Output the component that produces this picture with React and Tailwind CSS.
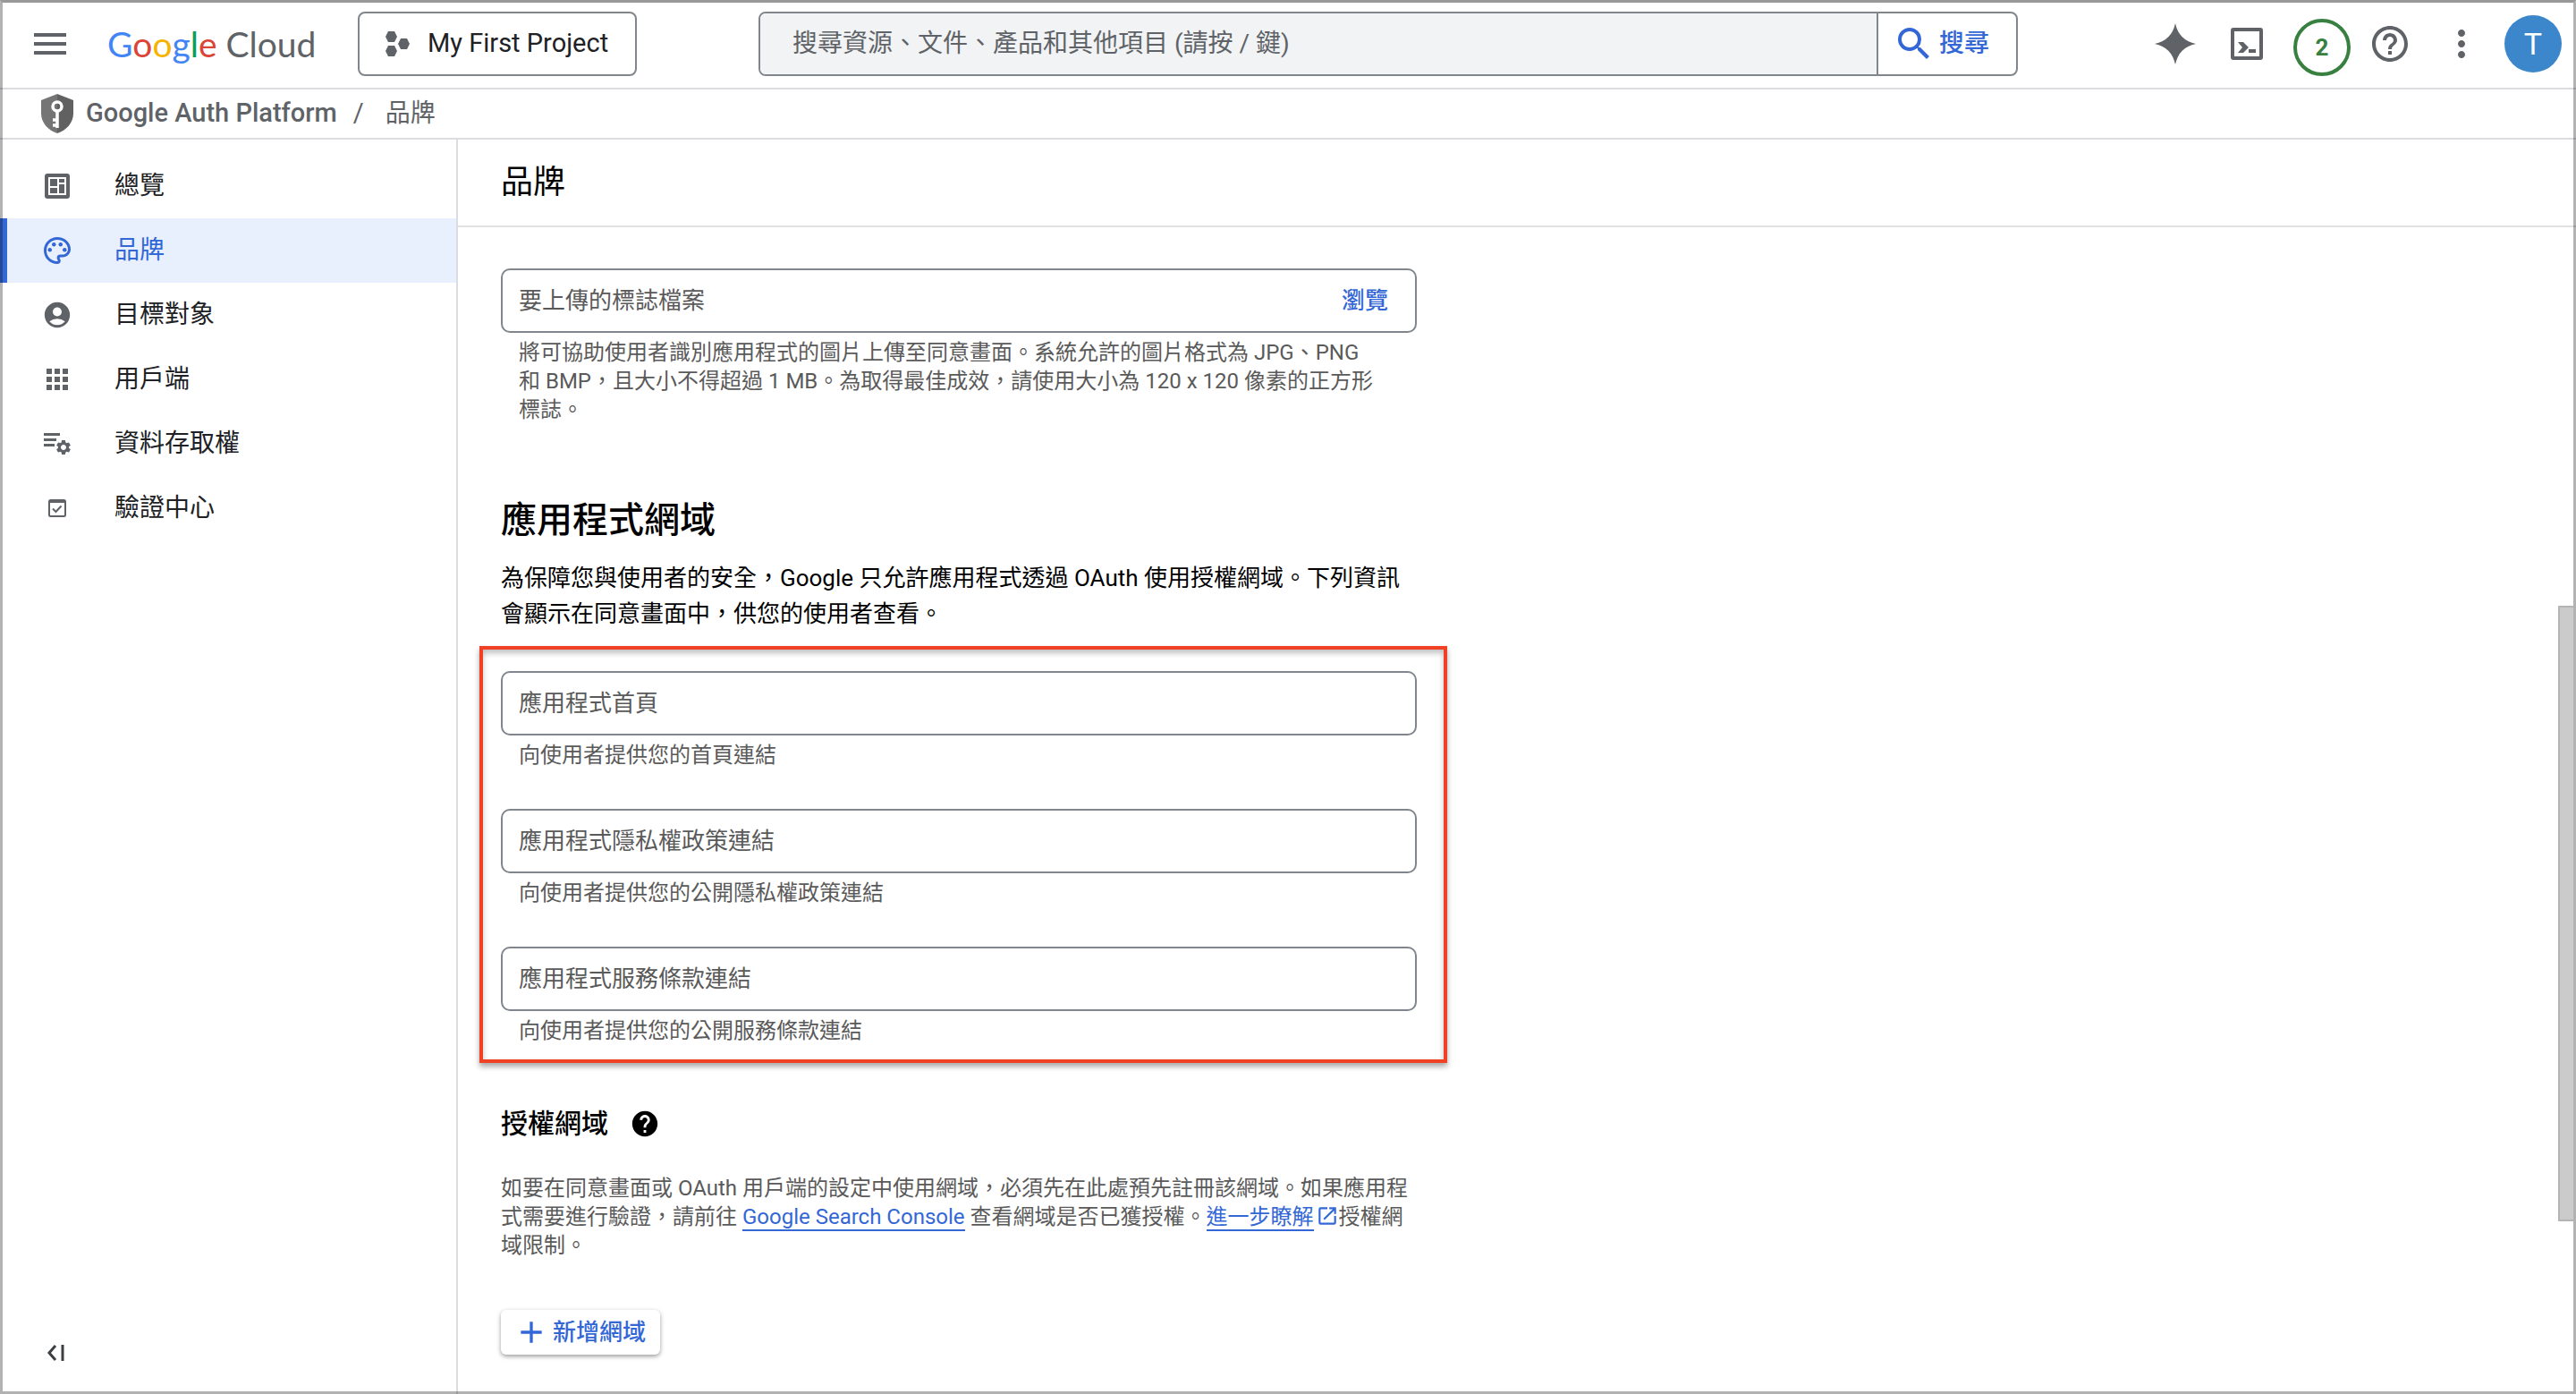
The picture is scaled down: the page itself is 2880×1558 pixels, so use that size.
import React from 'react';
import { MdAccountCircle, MdAdd, MdApps, MdHelp, MdHelpOutline, MdMoreVert, MdOpenInNew, MdOutlinePalette, MdSearch, MdSettings } from 'react-icons/md';

const fontStack = "font-['Roboto','Noto_Sans_CJK_TC',sans-serif]";

const OverviewIcon = () => (
    <svg viewBox="0 0 28 28" className="w-7 h-7" fill="currentColor" aria-hidden="true">
        <path fillRule="evenodd" d="M3 0h22a3 3 0 0 1 3 3v22a3 3 0 0 1-3 3H3a3 3 0 0 1-3-3V3a3 3 0 0 1 3-3zM4 4v20h20V4z" />
        <path d="M6 6h8v8H6zM16 6h6v4h-6zM16 12h6v10h-6zM6 16h8v6H6z" />
    </svg>
);

const DataAccessIcon = () => (
    <span className="relative block w-[30px] h-6">
        <svg viewBox="0 0 30 24" className="w-[30px] h-6" fill="currentColor" aria-hidden="true">
            <path d="M0 0h18v3H0zM0 6h14v3H0zM0 12h12v3H0z" />
        </svg>
        <MdSettings className="absolute -right-0.5 -bottom-0.5 text-[20px]" />
    </span>
);

const VerificationIcon = () => (
    <svg viewBox="0 0 20 20" className="w-5 h-5" fill="none" stroke="currentColor" strokeWidth="2" aria-hidden="true">
        <rect x="1" y="1" width="18" height="18" rx="1.5" />
        <path d="M1 3h18" />
        <path d="M5 10.5l3.5 3.5 6-6.5" />
    </svg>
);

const navItems = [
    { label: '總覽', icon: <OverviewIcon /> },
    { label: '品牌', icon: <MdOutlinePalette className="text-[36px]" />, active: true },
    { label: '目標對象', icon: <MdAccountCircle className="text-[34px]" /> },
    { label: '用戶端', icon: <MdApps className="text-[36px]" /> },
    { label: '資料存取權', icon: <DataAccessIcon /> },
    { label: '驗證中心', icon: <VerificationIcon /> },
];

const domainFields = [
    { id: 'home-page', label: '應用程式首頁', hint: '向使用者提供您的首頁連結' },
    { id: 'privacy-policy', label: '應用程式隱私權政策連結', hint: '向使用者提供您的公開隱私權政策連結' },
    { id: 'terms', label: '應用程式服務條款連結', hint: '向使用者提供您的公開服務條款連結' },
];

const Header = () => (
    <header className="flex items-center h-[100px] pl-[38px] pr-4 border-b-2 border-[#dadce0] text-[#5f6368]">
        <button aria-label="選單" className="shrink-0">
            <svg viewBox="0 0 36 24" className="w-9 h-6" fill="currentColor" aria-hidden="true">
                <path d="M0 0h36v4H0zM0 10h36v4H0zM0 20h36v4H0z" />
            </svg>
        </button>
        <a href="#" aria-label="Google Cloud" className="ml-[46px] w-[240px] shrink-0 font-['Lato',sans-serif] text-[39px] leading-[48px] whitespace-nowrap">
            <span className="text-[#4285f4]">G</span>
            <span className="text-[#db4437]">o</span>
            <span className="text-[#f4b400]">o</span>
            <span className="text-[#4285f4]">g</span>
            <span className="text-[#0f9d58]">l</span>
            <span className="text-[#db4437]">e</span>
            {' Cloud'}
        </a>
        <button className="ml-[40px] flex shrink-0 items-center gap-5 w-[312px] h-[72px] pl-7 border-2 border-[#80868b] rounded-lg text-[29px] text-[#202124] whitespace-nowrap">
            <svg viewBox="0 0 28 28" className="w-7 h-7" fill="#5f6368" aria-hidden="true">
                <path d="M4 0h7l3 6-3 6H4L1 6zM4 16h7l3 6-3 6H4l-3-6zM18 8h7l3 6-3 6h-7l-3-6z" />
            </svg>
            My First Project
        </button>
        <div role="search" className="ml-[136px] flex w-[1408px] h-[72px] border-2 border-[#80868b] rounded-lg overflow-hidden">
            <input
                type="text"
                aria-label="搜尋"
                placeholder="搜尋資源、文件、產品和其他項目 (請按 / 鍵)"
                className="flex-1 min-w-0 px-9 bg-[#f1f3f4] text-[28px] placeholder:text-[#5f6368] outline-none"
            />
            <button className="flex items-center gap-1 w-[156px] pl-[16px] border-l-2 border-[#80868b] text-[28px] font-medium text-[#3367d6]">
                <MdSearch className="text-[48px]" />
                搜尋
            </button>
        </div>
        <div className="ml-auto flex shrink-0 items-center">
            <button aria-label="Gemini">
                <svg viewBox="0 0 48 48" className="w-12 h-12" fill="currentColor" aria-hidden="true">
                    <path d="M24 1Q28 20 47 24 28 28 24 47 20 28 1 24 20 20 24 1z" />
                </svg>
            </button>
            <button aria-label="Cloud Shell" className="ml-[38px]">
                <svg viewBox="0 0 36 36" className="w-9 h-9" fill="currentColor" aria-hidden="true">
                    <path fillRule="evenodd" d="M3 0h30a3 3 0 0 1 3 3v30a3 3 0 0 1-3 3H3a3 3 0 0 1-3-3V3a3 3 0 0 1 3-3zM4 4v28h28V4z" />
                    <path d="M8 16h6l6 6-6 6H8l5-6zM20 24h8v4h-8z" />
                </svg>
            </button>
            <button aria-label="通知" className="ml-[34px] mt-2 w-16 h-16 border-4 border-[#388040] rounded-full text-[26px] font-bold text-[#388040]">2</button>
            <button aria-label="說明" className="ml-[20px]"><MdHelpOutline className="text-[48px]" /></button>
            <button aria-label="更多" className="ml-[32px]"><MdMoreVert className="text-[48px]" /></button>
            <button aria-label="帳戶" className="ml-[24px] w-16 h-16 rounded-full bg-[#3c87cc] text-[34px] text-white">T</button>
        </div>
    </header>
);

const Breadcrumb = () => (
    <nav aria-label="導覽標記" className="flex items-center h-[56px] pl-[46px] border-b-2 border-[#dadce0] text-[29px] text-[#5f6368]">
        <svg viewBox="0 0 36 44" className="w-9 h-11" aria-hidden="true">
            <path fill="#757575" d="M18 0L0 7v15c0 10 8 19 18 22z" />
            <path fill="#616161" d="M18 0l18 7v15c0 10-8 19-18 22z" />
            <g fill="none" stroke="#fff">
                <circle cx="18" cy="14" r="5" strokeWidth="3.5" />
                <path d="M18 19v19M18 29h-5M18 35h-5" strokeWidth="3.5" />
            </g>
        </svg>
        <a href="#" className="ml-3.5 font-medium">Google Auth Platform</a>
        <span className="ml-[18px]">/</span>
        <span className="ml-[24px] text-[28px]">品牌</span>
    </nav>
);

const Sidebar = () => (
    <aside className="flex flex-col justify-between w-[512px] shrink-0 border-r-2 border-[#dadce0]">
        <nav className="pt-4">
            {navItems.map(item => (
                <a
                    key={item.label}
                    href="#"
                    className={`flex items-center h-[72px] pl-[38px] text-[28px] border-l-8 ${item.active ? 'bg-[#e8f0fe] border-[#3367d6] text-[#3367d6]' : 'border-transparent text-[#202124]'}`}>
                    <span className={`flex w-9 justify-center ${item.active ? '' : 'text-[#5f6368]'}`}>{item.icon}</span>
                    <span className="ml-[46px]">{item.label}</span>
                </a>
            ))}
        </nav>
        <button aria-label="收合選單" className="mb-[36px] ml-[52px] self-start text-[#3c4043]">
            <svg viewBox="0 0 20 20" className="w-5 h-5" fill="none" stroke="currentColor" strokeWidth="3" aria-hidden="true">
                <path d="M10 2L3 10l7 8M18 1v18" />
            </svg>
        </button>
    </aside>
);

const TextField = ({ id, label, hint }) => (
    <div>
        <input
            id={id}
            type="text"
            aria-label={label}
            aria-describedby={`${id}-hint`}
            placeholder={label}
            className="block w-full h-[72px] px-[18px] border-2 border-[#80868b] rounded-[10px] text-[26px] placeholder:text-[#5a5a5a] outline-none"
        />
        <p id={`${id}-hint`} className="mt-1.5 px-5 text-[24px] leading-8 text-[#5a5a5a]">{hint}</p>
    </div>
);

const BrandingPage = () => (
    <main className="relative flex-1 min-w-0">
        <div className="flex items-center h-[98px] pl-12 border-b-2 border-[#e0e0e0]">
            <h1 className="text-[36px] leading-[48px] text-black">品牌</h1>
        </div>

        <div className="ml-12 mt-[46px] max-w-[1024px]">
            {/* Logo upload */}
            <div className="flex items-center h-[72px] pl-[18px] pr-[30px] border-2 border-[#80868b] rounded-[10px] text-[26px]">
                <input
                    type="text"
                    readOnly
                    aria-label="要上傳的標誌檔案"
                    aria-describedby="logo-hint"
                    placeholder="要上傳的標誌檔案"
                    className="flex-1 min-w-0 placeholder:text-[#5a5a5a] outline-none"
                />
                <button className="font-medium text-[#3367d6]">瀏覽</button>
            </div>
            <p id="logo-hint" className="mt-1.5 pl-5 pr-10 text-[24px] leading-8 text-[#5a5a5a]">
                將可協助使用者識別應用程式的圖片上傳至同意畫面。系統允許的圖片格式為 JPG、PNG 和 BMP，且大小不得超過 1 MB。為取得最佳成效，請使用大小為 120 x 120 像素的正方形標誌。
            </p>

            {/* App domain */}
            <h2 className="mt-[84px] text-[40px] leading-[48px] font-medium text-black">應用程式網域</h2>
            <p className="mt-5 text-[26px] leading-10 text-black">
                為保障您與使用者的安全，Google 只允許應用程式透過 OAuth 使用授權網域。下列資訊會顯示在同意畫面中，供您的使用者查看。
            </p>
            <div className="mt-4 -ml-6 -mr-[34px] flex flex-col gap-11 pt-6 pb-4 pl-5 pr-[30px] border-4 border-[#f04124] shadow-[0_4px_6px_rgba(0,0,0,0.35),inset_0_4px_6px_rgba(0,0,0,0.25)]">
                {domainFields.map(field => (
                    <TextField key={field.id} {...field} />
                ))}
            </div>

            {/* Authorized domains */}
            <div className="mt-12 flex items-center gap-6 text-black">
                <h3 className="text-[30px] leading-10 font-medium">授權網域</h3>
                <button aria-label="授權網域說明"><MdHelp className="text-[34px]" /></button>
            </div>
            <p className="mt-9 text-[24px] leading-8 text-[#5a5a5a]">
                如要在同意畫面或 OAuth 用戶端的設定中使用網域，必須先在此處預先註冊該網域。如果應用程式需要進行驗證，請前往{' '}
                <a href="#" className="border-b-2 border-[#3367d6] text-[#3367d6]">Google Search Console</a>
                {' '}查看網域是否已獲授權。
                <a href="#" className="text-[#3367d6]">
                    <span className="border-b-2 border-[#3367d6]">進一步瞭解</span>
                    <MdOpenInNew className="inline ml-0.5 text-[26px] align-[-4px]" />
                </a>
                授權網域限制。
            </p>
            <button className="mt-14 flex items-center gap-1 h-[50px] pl-[14px] pr-4 rounded-md bg-white text-[26px] font-medium text-[#3367d6] shadow-[0_2px_5px_rgba(0,0,0,0.4)]">
                <MdAdd className="text-[40px]" />
                新增網域
            </button>
        </div>

        {/* Scroll thumb */}
        <div className="absolute right-[3px] top-[521px] w-[17px] h-[688px] bg-[#cbcbcb] border-2 border-r-0 border-[#b4b4b4]" />
    </main>
);

const App = () => {
    return (
        <div className={`relative flex flex-col min-h-screen bg-white ${fontStack}`}>
            <Header />
            <Breadcrumb />
            <div className="flex flex-1">
                <Sidebar />
                <BrandingPage />
            </div>
            <div className="pointer-events-none absolute inset-0 border-[3px] border-black/30 border-t-black/40" />
        </div>
    );
};

export default App;
